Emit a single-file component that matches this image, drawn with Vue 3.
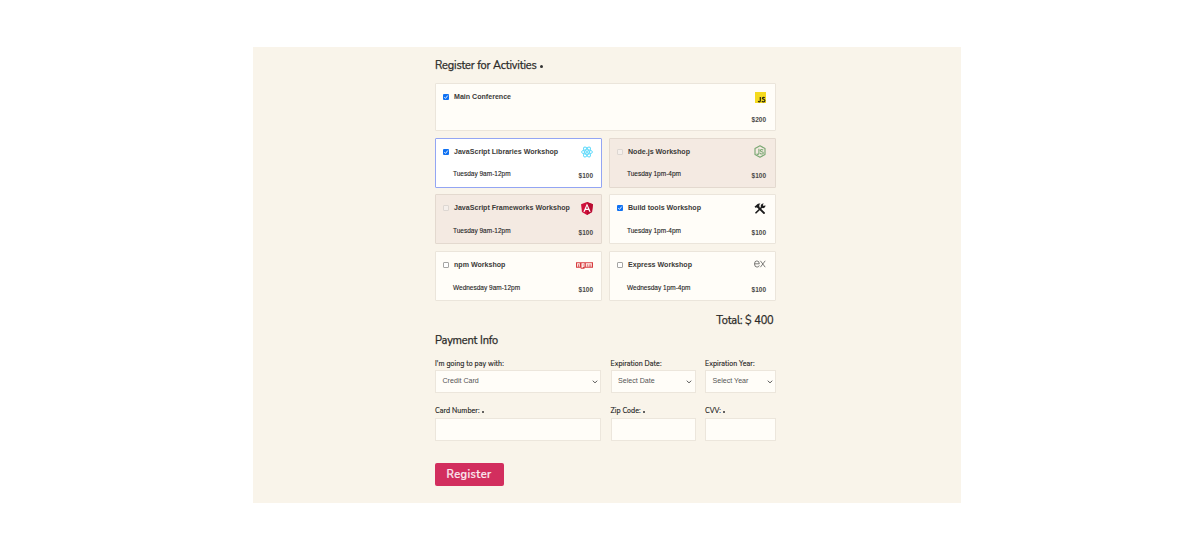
<script setup>
import { ref } from 'vue'

const activities = ref([
  { name: 'Main Conference', icon: 'js', price: 200, checked: true, main: true },
  { name: 'JavaScript Libraries Workshop', time: 'Tuesday 9am-12pm', icon: 'react', price: 100, checked: true, focus: true },
  { name: 'Node.js Workshop', time: 'Tuesday 1pm-4pm', icon: 'node', price: 100, disabled: true },
  { name: 'JavaScript Frameworks Workshop', time: 'Tuesday 9am-12pm', icon: 'angular', price: 100, disabled: true },
  { name: 'Build tools Workshop', time: 'Tuesday 1pm-4pm', icon: 'tools', price: 100, checked: true },
  { name: 'npm Workshop', time: 'Wednesday 9am-12pm', icon: 'npm', price: 100 },
  { name: 'Express Workshop', time: 'Wednesday 1pm-4pm', icon: 'express', price: 100 }
])
</script>

<template>
  <main class="page">
    <form class="form" @submit.prevent>
      <h2 class="heading activities-title"><span>Register for Activities</span><i class="dot"></i></h2>

      <div class="activities">
        <label
          v-for="a in activities"
          :key="a.name"
          class="card"
          :class="{ main: a.main, focus: a.focus, disabled: a.disabled }"
        >
          <span class="box" :class="{ checked: a.checked }">
            <svg v-if="a.checked" viewBox="0 0 6 6"><path d="M1.3 3.2 2.5 4.4 4.8 1.5" fill="none" stroke="#fff" stroke-width=".9" /></svg>
          </span>
          <span class="name">{{ a.name }}</span>
          <span class="icon">
            <svg v-if="a.icon === 'js'" class="i-js" viewBox="0 0 11 11">
              <rect width="11" height="11" fill="#f5da1e" />
              <path d="M5.3 5.1v3.6q0 1.1-1 1.1-.7 0-1-.8M9.7 6q-.4-.7-1.2-.7-1.1 0-1.1.9 0 .7 1.2 1 1.3.4 1.3 1.3 0 1.3-1.4 1.3-1.1 0-1.5-.9" fill="none" stroke="#2b290d" stroke-width="1.2" />
            </svg>
            <svg v-else-if="a.icon === 'react'" class="i-react" viewBox="-12 -12 24 24">
              <g fill="none" stroke="#61dafb" stroke-width="2">
                <ellipse rx="11" ry="4.3" />
                <ellipse rx="11" ry="4.3" transform="rotate(60)" />
                <ellipse rx="11" ry="4.3" transform="rotate(120)" />
              </g>
              <circle r="2.2" fill="#61dafb" />
            </svg>
            <svg v-else-if="a.icon === 'node'" class="i-node" viewBox="0 0 24 26">
              <path d="M12 1.5 22 7.2V18.8L12 24.5 2 18.8V7.2Z" fill="none" stroke="#7aa873" stroke-width="2.3" stroke-linejoin="round" />
              <path d="M9.8 7.5v9.2q0 2-2 2-1.8 0-2.3-1.6M18.2 10.7q-.8-1.6-3-1.6-2.7 0-2.7 2 0 1.8 2.9 2.2 3.2.4 3.2 2.5 0 2.3-3.1 2.3-3 0-3.4-2.3" fill="none" stroke="#7aa873" stroke-width="2.1" />
            </svg>
            <svg v-else-if="a.icon === 'angular'" class="i-angular" viewBox="0 0 22 24">
              <path d="M11 0 22 4 20.3 18.5 11 24 1.7 18.5 0 4Z" fill="#d0103a" />
              <path d="M11 0 22 4 20.3 18.5 11 24Z" fill="#b80c32" />
              <path fill-rule="evenodd" d="M11 2.8 17.8 18h-2.7l-1.3-3.4H8.2L6.9 18H4.2ZM11 7.6 9.1 12.3h3.8Z" fill="#fff" />
            </svg>
            <svg v-else-if="a.icon === 'tools'" class="i-tools" viewBox="0 0 24 22">
              <path d="M8 8 20 20" stroke="#1c1c1c" stroke-width="3.6" stroke-linecap="round" />
              <path d="M1 7.5 7.2 1.8Q9.5 0 13 1.3L10 3.8 11.4 6.4 7.8 9.6 5.6 8.4 3.8 10.2Z" fill="#1c1c1c" />
              <path d="M4 19.5 15.5 8.5" stroke="#1c1c1c" stroke-width="3.4" stroke-linecap="round" />
              <path d="M19.5 1.2 17.5 4.2 19.4 6.2 22.6 4.3Q23.4 8 20.6 9.7 18.2 11 15.6 9.6L13.6 7.4Q13 4.3 15 2.3 16.8.7 19.5 1.2Z" fill="#1c1c1c" />
            </svg>
            <svg v-else-if="a.icon === 'npm'" class="i-npm" viewBox="0 0 18 7">
              <path d="M0 0H18V6H9V7H5V6H0Z" fill="#d83c40" />
              <path d="M1.2 1.2H4V4.8H3.2V2.2H2.4V4.8H1.2ZM5.8 1.2H9V4.8H7.2V5.8H5.8ZM7.2 2.2V3.8H7.9V2.2ZM10.4 1.2H16.8V4.8H16V2.2H15.3V4.8H14.3V2.2H13.5V4.8H10.4Z" fill="#fffdf8" fill-rule="evenodd" />
              <path d="M11.5 2.2H12.3V4.8H11.5Z" fill="#d83c40" />
            </svg>
            <svg v-else class="i-express" viewBox="0 0 12 8">
              <path d="M.5 3.8H5.3Q5.3.9 2.9.9.5.9.5 3.9.5 7.1 3 7.1 4.8 7.1 5.3 5.4M6.4.8 11.2 7.2M11.2.8 6.4 7.2" fill="none" stroke="#5c5c59" stroke-width=".8" />
            </svg>
          </span>
          <span class="time">{{ a.time }}</span>
          <span class="price">${{ a.price }}</span>
        </label>
      </div>

      <p class="heading total">Total: $ 400</p>
      <h2 class="heading payment-title">Payment Info</h2>

      <div class="fields">
        <div class="field">
          <span class="label">I'm going to pay with:</span>
          <div class="control">Credit Card<svg class="chev" viewBox="0 0 6 4"><path d="M.8.7 3 2.9 5.2.7" /></svg></div>
        </div>
        <div class="field">
          <span class="label">Expiration Date:</span>
          <div class="control">Select Date<svg class="chev" viewBox="0 0 6 4"><path d="M.8.7 3 2.9 5.2.7" /></svg></div>
        </div>
        <div class="field">
          <span class="label">Expiration Year:</span>
          <div class="control">Select Year<svg class="chev" viewBox="0 0 6 4"><path d="M.8.7 3 2.9 5.2.7" /></svg></div>
        </div>
        <div class="field lower">
          <span class="label">Card Number:<i class="dot"></i></span>
          <div class="control"></div>
        </div>
        <div class="field lower">
          <span class="label">Zip Code:<i class="dot"></i></span>
          <div class="control"></div>
        </div>
        <div class="field lower">
          <span class="label">CVV:<i class="dot"></i></span>
          <div class="control"></div>
        </div>
      </div>

      <button class="register" type="submit">Register</button>
    </form>
  </main>
</template>

<style>
body {
  background: #fff;
}
</style>

<style scoped>
.page {
  box-sizing: border-box;
  width: 708px;
  height: 456px;
  margin: 47px 0 0 253px;
  padding: 10px 185px 0 182px;
  background: #f9f4ea;
  font-family: "Liberation Sans", Arial, sans-serif;
  color: #333;
}
.form {
  width: 341px;
}
.heading {
  margin: 0;
  font: 400 11px/17px Nunito, "Noto Sans", sans-serif;
  letter-spacing: -0.17px;
  color: #2b2a28;
  -webkit-text-stroke: 0.25px #2b2a28;
}
.activities-title {
  display: flex;
  align-items: center;
}
.dot {
  display: inline-block;
  width: 3px;
  height: 3px;
  margin: 1px 0 0 3px;
  border-radius: 50%;
  background: #333;
}
.activities {
  display: grid;
  grid-template-columns: 167px 167px;
  grid-template-rows: 48px 50px 50px 50px;
  gap: 6.7px 7px;
  margin-top: 9px;
}
.card {
  box-sizing: border-box;
  display: grid;
  grid-template-columns: 7px 1fr auto;
  grid-template-rows: 14px 9px;
  column-gap: 4px;
  row-gap: 12px;
  align-items: center;
  align-content: start;
  padding: 6px 8px 0 7px;
  border: 1px solid #ebe5db;
  border-radius: 1px;
  background: #fffdf8;
}
.card:nth-child(odd) {
  padding-right: 9px;
}
.card.main {
  grid-column: 1 / -1;
  row-gap: 11px;
}
.card.focus {
  border-color: #93a5f3;
  background: #fff;
}
.card.disabled {
  border-color: #e3d9cf;
  background: #f4eae2;
}
.box {
  box-sizing: border-box;
  display: block;
  width: 6px;
  height: 6px;
  border: 1px solid #a5a5a3;
  border-radius: 1px;
  background: #fff;
}
.box.checked {
  border: 0;
  background: #0f71f2;
}
.box svg {
  display: block;
  width: 6px;
  height: 6px;
}
.disabled .box {
  border-color: #ddd7d2;
  background: #f5efeb;
}
.name {
  font-size: 7.08px;
  font-weight: 700;
  line-height: 14px;
  white-space: nowrap;
  color: #3c3b39;
}
.icon {
  display: flex;
  justify-content: flex-end;
}
.icon svg {
  display: block;
}
.i-js { width: 11px; height: 11px; }
.i-react { width: 12px; height: 12px; }
.i-node { width: 12px; height: 13px; }
.i-angular { width: 12px; height: 13px; margin-top: 1px; }
.i-tools { width: 12px; height: 11px; }
.i-npm { width: 17px; height: 7px; }
.i-express { width: 12px; height: 8px; margin-top: -2px; }
.time {
  grid-column: 1 / 3;
  padding-left: 10px;
  margin-top: -3px;
  font-size: 6.5px;
  line-height: 9px;
  white-space: nowrap;
  color: #222;
  -webkit-text-stroke: 0.1px #222;
}
.price {
  padding-top: 1px;
  font-size: 6.5px;
  font-weight: 700;
  line-height: 9px;
  text-align: right;
  color: #4a4947;
}
.card.main .price {
  padding-top: 0;
}
.total {
  margin: 11px 2.5px 0 0;
  text-align: right;
}
.payment-title {
  margin-top: 3px;
}
.fields {
  display: grid;
  grid-template-columns: 166px 85px 71px;
  gap: 13px 9.5px;
  margin-top: 9px;
}
.label {
  display: flex;
  align-items: center;
  height: 12px;
  font: 400 7px/12px Nunito, "Noto Sans", sans-serif;
  letter-spacing: 0.06px;
  color: #222;
  -webkit-text-stroke: 0.15px #222;
  white-space: nowrap;
}
.lower .label {
  height: 10px;
  margin-bottom: 2px;
  line-height: 10px;
  letter-spacing: 0.08px;
}
.label .dot {
  width: 2px;
  height: 2px;
  margin-left: 2px;
}
.control {
  box-sizing: border-box;
  display: flex;
  align-items: center;
  justify-content: space-between;
  height: 23px;
  padding: 0 2.5px 2px 6.5px;
  border: 1px solid #ece6dc;
  background: #fffdf8;
  font-size: 7.1px;
  color: #555;
}
.chev {
  width: 6px;
  height: 4px;
  margin-top: 3px;
}
.chev path {
  fill: none;
  stroke: #555;
  stroke-width: 1;
}
.register {
  display: block;
  width: 69px;
  height: 23px;
  margin: 21.5px 0 0;
  padding: 1px 1px 0 0;
  border: 0;
  border-radius: 2px;
  background: #d22e5e;
  color: #fbeaf0;
  font: 600 11px/22px Nunito, "Noto Sans", sans-serif;
  letter-spacing: 0.42px;
  -webkit-text-stroke: 0.2px #fbeaf0;
}
</style>
